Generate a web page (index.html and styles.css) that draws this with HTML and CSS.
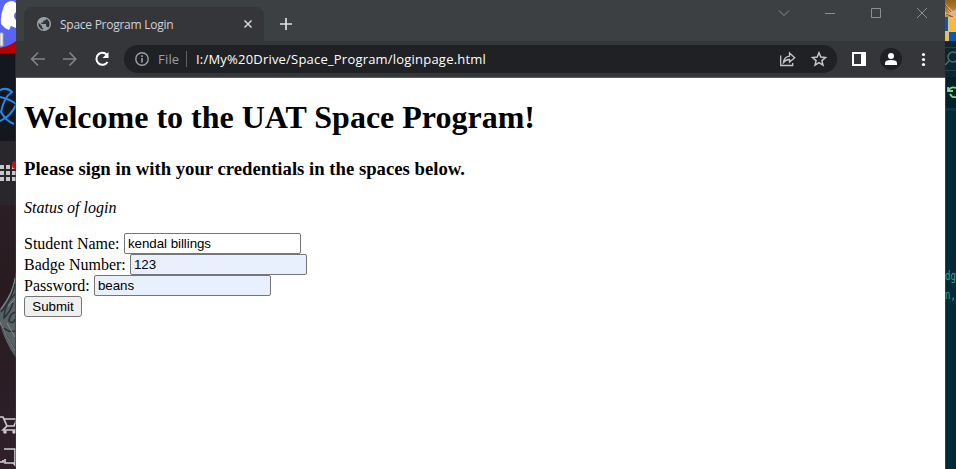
FILE: index.html
```html
<!DOCTYPE html>
<html lang="en">
<head>
<meta charset="utf-8">
<title>Space Program Login</title>
<link rel="stylesheet" href="styles.css">
</head>
<body>
<div class="desktop">
  <aside class="strip">
    <svg width="16" height="469" viewBox="0 0 16 469">
      <defs>
        <linearGradient id="lib" x1="0" y1="0" x2="0" y2="1">
          <stop offset="0" stop-color="#2b1e24"/><stop offset=".35" stop-color="#271b20"/><stop offset="1" stop-color="#30202a"/>
        </linearGradient>
      </defs>
      <rect width="16" height="53" fill="#5865f2"/>
      <path d="M0 48Q10 46 16 41V53H0z" fill="#b90000"/>
      <path d="M16 3L13 1Q8 1 5 4Q0 14 1 24Q4 28 9 30L11 26L16 28V20A5 5 0 0 1 16 12z" fill="#fff"/>
      <path d="M0 33h3v13H0z" fill="#f1f1f1" stroke="#aaa"/>
      <rect y="53" width="16" height="88" fill="#15171e"/>
      <g fill="none" stroke="#2388eb" stroke-width="2">
        <path d="M0 90Q7 87 12 92Q4 97 1 112Q6 121 14 124"/>
        <path d="M0 97Q10 99 16 104"/><path d="M0 121Q11 116 16 105"/>
      </g>
      <rect y="141" width="16" height="64" fill="#29272b"/>
      <path d="M0 165h4v4H0zM6 165h4v4H6zM12 165h4v4h-4zM0 171h4v4H0zM6 171h4v4H6zM12 171h4v4h-4zM0 177h4v4H0zM6 177h4v4H6zM12 177h4v4h-4z" fill="#c8c8c8"/>
      <circle cx="16" cy="165" r="4" fill="#dc0712"/>
      <rect y="205" width="16" height="264" fill="url(#lib)"/>
      <path d="M16 271Q14 291 0 309V325Q5 342 16 358z" fill="#596165"/>
      <path d="M15 284Q11 301 1 312M15 294Q4 304 4 318Q10 312 13 303M1 325Q7 339 15 349M15 312Q9 315 9 321Q13 325 15 319M4 328Q9 333 15 331" fill="none" stroke="#273237" stroke-width="1.500"/>
      <path d="M15 278Q13 294 1 309M0 322Q5 336 15 350M8 306L15 299M7 323L15 337" fill="none" stroke="#85898a"/>
      <g fill="none" stroke="#d0cbce" stroke-width="1.7">
        <path d="M0 417h3l4 9h7l3-7H4M7 426l-4 4h13"/>
        <path d="M4 449h11v14h-2M0 462h3v-2M5 459v4h8l3 3"/>
      </g>
      <circle cx="5" cy="432" r="1.8" fill="#d0cbce"/><circle cx="14" cy="432" r="1.8" fill="#d0cbce"/>
      <path d="M15.5 53V469" stroke="#3b3b40" stroke-opacity=".55"/>
    </svg>
  </aside>

  <main class="window">
    <header class="titlebar">
      <div class="tab">
        <svg class="globe" width="14" height="14" viewBox="2 2 20 20">
          <path fill="#9aa0a6" d="M12 2C6.480 2 2 6.480 2 12s4.480 10 10 10 10-4.480 10-10S17.520 2 12 2zm-1 17.930c-3.950-.490-7-3.850-7-7.930 0-.620.080-1.210.210-1.790L9 15v1c0 1.100.900 2 2 2v1.930zm6.900-2.540c-.260-.810-1-1.390-1.900-1.390h-1v-3c0-.550-.450-1-1-1H8v-2h2c.550 0 1-.450 1-1V7h2c1.100 0 2-.900 2-2v-.410c2.930 1.190 5 4.060 5 7.410 0 2.080-.800 3.970-2.100 5.390z"/>
        </svg>
        <span class="tab-title">Space Program Login</span>
        <svg class="tab-close" width="8" height="8" viewBox="0 0 8 8"><path d="M.5.5l7 7M7.5.5l-7 7" stroke="#d5d7da" stroke-width="1.5"/></svg>
      </div>
      <svg class="plus" width="12" height="12" viewBox="0 0 12 12"><path d="M6 0v12M0 6h12" stroke="#dfe1e5" stroke-width="1.7"/></svg>
      <svg class="controls" width="150" height="12" viewBox="0 0 150 12" fill="none" stroke="#8b8e90">
        <path d="M1 3.5l5 5 5-5M47 6.500h10M93.500 1.500h9v9h-9zM139 1l10 10M149 1l-10 10"/>
      </svg>
    </header>

    <nav class="toolbar">
      <svg class="history" width="80" height="16" viewBox="0 0 80 16" fill="none" stroke="#828488" stroke-width="1.6">
        <path d="M15 8H2M8 1.500L1.700 8 8 14.500M33 8h13M39.500 1.500L45.800 8l-6.300 6.500"/>
        <path d="M76.800 3.700A6 6 0 1 0 77.500 11" stroke="#fff" stroke-width="2"/>
        <path d="M78.500 1v6h-6z" fill="#fff" stroke="none"/>
      </svg>
      <div class="omnibox">
        <svg width="14" height="14" viewBox="0 0 14 14"><circle cx="7" cy="7" r="6.200" fill="none" stroke="#9aa0a6" stroke-width="1.400"/><path d="M7 6v4.500M7 3.300v1.600" stroke="#9aa0a6" stroke-width="1.600"/></svg>
        <span class="scheme">File</span>
        <span class="divider"></span>
        <span class="url">I:/My%20Drive/Space_Program/loginpage.html</span>
        <svg class="page-actions" width="48" height="16" viewBox="0 0 48 16" fill="none" stroke="#c3c5c8" stroke-width="1.300">
          <path d="M.7 4.500v10h12v-2.500M3.500 11.500Q4.300 5.700 9.500 5.200V2l5.200 4.700L9.500 11V8.500Q6 8.300 3.500 11.500z"/>
          <path d="M39 1.800l1.800 4.300 4.700.4-3.600 3.100 1.100 4.600-4-2.500-4 2.500 1.100-4.600-3.600-3.100 4.700-.4z" stroke-width="1.500"/>
        </svg>
      </div>
      <svg class="browser-actions" width="78" height="22" viewBox="0 0 78 22">
        <path fill="#fff" fill-rule="evenodd" d="M0 4h14v14H0zM2 6v10h7V6z"/>
        <circle cx="39" cy="11" r="11" fill="#202124"/>
        <circle cx="39" cy="8" r="3" fill="#fff"/><path d="M33 17v-2q0-3 6-3t6 3v2z" fill="#fff"/>
        <g fill="#fff"><circle cx="71.500" cy="6.500" r="1.600"/><circle cx="71.500" cy="11.500" r="1.600"/><circle cx="71.500" cy="16.500" r="1.600"/></g>
      </svg>
    </nav>

    <section class="page">
      <h1>Welcome to the UAT Space Program!</h1>
      <h3>Please sign in with your credentials in the spaces below.</h3>
      <p><i>Status of login</i></p>
      <form>
        <div class="row"><label class="l-name" for="name">Student Name:</label><input id="name" type="text" value="kendal billings"></div>
        <div class="row"><label class="l-badge" for="badge">Badge Number:</label><input id="badge" class="filled" type="text" value="123"></div>
        <div class="row"><label class="l-pass" for="pass">Password:</label><input id="pass" class="filled" type="text" value="beans"></div>
        <button type="button">Submit</button>
      </form>
    </section>
  </main>

  <aside class="strip">
    <svg width="11" height="469" viewBox="0 0 11 469">
      <defs>
        <linearGradient id="gold" x1="0" y1="0" x2="0" y2="1"><stop offset="0" stop-color="#946016"/><stop offset="1" stop-color="#d29834"/></linearGradient>
      </defs>
      <rect width="11" height="469" fill="#002b36"/>
      <rect width="11" height="18" fill="url(#gold)"/>
      <path d="M0 4l8 7 3-2v8H8l-8-2v-3l5 2z" fill="#e2b18f"/>
      <path d="M0 5l6 7M1 14l7 3" stroke="#824322"/>
      <rect y="17" width="11" height="24" fill="#fdb839"/>
      <path d="M0 17h3v14H0zM4 32h7v9H4z" fill="#0759b3"/>
      <path d="M0 31.500h11M3.500 17v24" stroke="#d3c39b"/>
      <rect y="41" width="11" height="36" fill="#0b272e"/>
      <path d="M0 47.500h11M0 70.500h11" stroke="#25424a"/>
      <path d="M0 65l4-4" stroke="#526a70" stroke-width="1.500"/><circle cx="8" cy="57" r="5" fill="none" stroke="#526a70" stroke-width="1.500"/>
      <rect y="77" width="11" height="31" fill="#00212b"/>
      <path d="M3 87v4h5M3 91q3-5 8-3M5 94q2 4 6 3" fill="none" stroke="#89d185" stroke-width="1.800"/>
      <rect y="108" width="11" height="3" fill="#073642"/>
      <path d="M.5 77V469" stroke="#29434a"/>
      <g class="code"><text x="0" y="280" textLength="11" lengthAdjust="spacingAndGlyphs">dg</text><text x="0" y="299" textLength="11" lengthAdjust="spacingAndGlyphs">n,</text></g>
    </svg>
  </aside>
</div>
</body>
</html>
```
FILE: styles.css
```css
* { box-sizing: border-box; }
body { margin: 0; overflow: hidden; }
svg { display: block; flex: none; }
.desktop { display: grid; grid-template-columns: 16px 929px 11px; height: 469px; }
.strip { overflow: hidden; }
.window { display: flex; flex-direction: column; background: #fff; min-width: 0; }

.titlebar { display: flex; height: 41px; flex: none; padding-left: 8px; background: #3c4043; font-family: "Open Sans", "Noto Sans", sans-serif; }
.tab { display: flex; align-items: center; width: 240px; height: 34px; margin-top: 7px; padding: 0 12px 0 13px; border-radius: 8px 8px 0 0; background: #35363a; }
.tab-title { flex: 1; margin-left: 9px; color: #d0d2d5; font-size: 12px; letter-spacing: -0.26px; white-space: nowrap; }
.plus { margin: 18px 0 0 16px; }
.controls { margin: 7px 17px 0 auto; }

.toolbar { display: flex; align-items: center; height: 37px; flex: none; padding-left: 14px; background: #35363a; border-bottom: 1px solid #5b5c60; }
.history { margin-right: 14px; }
.omnibox { display: flex; align-items: center; width: 713px; height: 28px; padding: 0 9px 0 11px; border-radius: 14px; background: #202124; font-family: "Open Sans", "Noto Sans", sans-serif; font-size: 13px; white-space: nowrap; }
.scheme { width: 20px; margin-left: 9px; color: #9aa0a6; letter-spacing: 0.2px; }
.divider { width: 1px; height: 16px; margin: 0 9px 0 8px; background: #5f6368; }
.url { color: #fff; letter-spacing: 0.205px; }
.page-actions { margin-left: auto; }
.browser-actions { margin-left: 15px; }

.page { padding: 21px 8px 0; color: #000; font: 16px "Liberation Serif", serif; }
h1 { height: 37px; margin: 0 0 22px; font-size: 32px; line-height: 37px; white-space: nowrap; }
h3 { height: 22px; margin: 0 0 19px; font-size: 18.72px; line-height: 22px; white-space: nowrap; }
p { margin: 0 0 16px; line-height: 18px; }
form { display: flex; flex-direction: column; align-items: flex-start; }
.row { display: flex; align-items: center; height: 21px; }
label { white-space: nowrap; }
.l-name { width: 100px; }
.l-badge { width: 106px; }
.l-pass { width: 70px; }
input { width: 177px; height: 21px; margin: 0; padding: 1px 3px; border: 1px solid #767676; border-radius: 2px; background: #fff; color: #000; font: 13.333px "Liberation Sans", sans-serif; letter-spacing: -0.05px; }
.filled { background: #e8f0fe; }
button { width: 58px; height: 21px; margin: 0; padding: 0; border: 1px solid #767676; border-radius: 3px; background: #efefef; color: #000; font: 13.333px "Liberation Sans", sans-serif; }
.code { fill: #2aa198; font: 12px "DejaVu Sans Mono", monospace; }
```
